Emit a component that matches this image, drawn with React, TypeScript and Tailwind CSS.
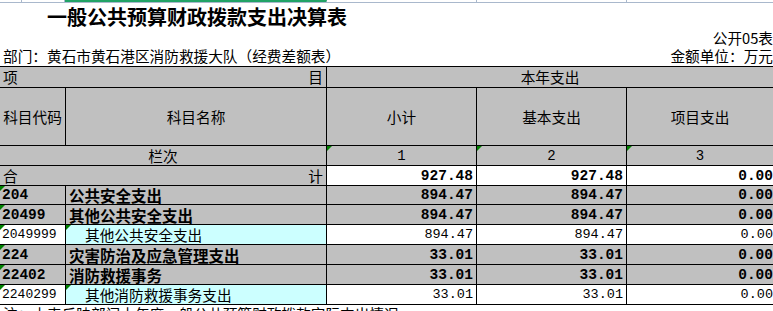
import React from "react";

type Row = { code: string; name: string; v: string[]; bold: boolean };

const rows: Row[] = [
  { code: "204", name: "公共安全支出", v: ["894.47", "894.47", "0.00"], bold: true },
  { code: "20499", name: "其他公共安全支出", v: ["894.47", "894.47", "0.00"], bold: true },
  { code: "2049999", name: "其他公共安全支出", v: ["894.47", "894.47", "0.00"], bold: false },
  { code: "224", name: "灾害防治及应急管理支出", v: ["33.01", "33.01", "0.00"], bold: true },
  { code: "22402", name: "消防救援事务", v: ["33.01", "33.01", "0.00"], bold: true },
  { code: "2240299", name: "其他消防救援事务支出", v: ["33.01", "33.01", "0.00"], bold: false },
];

const Tri = () => (
  <span className="absolute left-0 top-0 w-0 h-0 border-t-[5px] border-t-[#008000] border-r-[5px] border-r-transparent" />
);

const cell = "relative border-r border-b border-black flex items-center overflow-hidden whitespace-nowrap leading-[16px]";
const mono = "font-['Liberation_Mono',monospace]";

export default function App() {
  return (
    <div className="w-[773px] h-[311px] overflow-hidden bg-white text-black font-['Noto_Sans_CJK_SC',sans-serif] leading-none">
      <div className="flex h-[3px] w-[777px] border-b border-[#a9b8cc]">
        <div className="w-[22px] border-r border-[#a9b8cc]" />
        <div className="w-[43px] border-r border-[#a9b8cc]" />
        <div className="w-[262px] border-r border-[#a9b8cc] border-t-2 border-t-[#21a366]" />
        <div className="w-[150px] border-r border-[#a9b8cc]" />
        <div className="w-[150px] border-r border-[#a9b8cc]" />
        <div className="flex-1" />
      </div>
      <div className="h-[27px] flex items-center pl-[47px] text-[20px] font-bold">
        一般公共预算财政拨款支出决算表
      </div>
      <div className="h-[17px] flex items-center justify-end text-[14.67px]">公开05表</div>
      <div className="h-[19px] flex items-center justify-between pl-[3px] text-[14.67px]">
        <span>部门：黄石市黄石港区消防救援大队（经费差额表）</span>
        <span>金额单位：万元</span>
      </div>

      <div className="grid w-[777px] grid-cols-[66px_261px_150px_150px_150px] grid-rows-[22px_58px_20px_20px_19px_20px_20px_20px_20px_20px] text-[14.67px]">
        <div className={`${cell} col-span-2 border-t bg-[#c0c0c0] justify-between px-[3px]`}>
          <span>项</span>
          <span>目</span>
        </div>
        <div className={`${cell} col-span-3 border-t bg-[#c0c0c0] justify-center pr-[3px]`}>本年支出</div>

        <div className={`${cell} bg-[#c0c0c0] justify-center`}>科目代码</div>
        <div className={`${cell} bg-[#c0c0c0] justify-center`}>科目名称</div>
        <div className={`${cell} bg-[#c0c0c0] justify-center`}>小计</div>
        <div className={`${cell} bg-[#c0c0c0] justify-center`}>基本支出</div>
        <div className={`${cell} bg-[#c0c0c0] justify-center pr-[3px]`}>项目支出</div>

        <div className={`${cell} col-span-2 bg-[#c0c0c0] justify-center`}>栏次</div>
        {["1", "2", "3"].map((n, i) => (
          <div key={n} className={`${cell} bg-[#c0c0c0] justify-center ${mono} text-[14px] ${i === 2 ? "pr-[3px]" : ""}`}>
            <Tri />
            {n}
          </div>
        ))}

        <div className={`${cell} col-span-2 bg-[#c0c0c0] justify-between px-[3px]`}>
          <span>合</span>
          <span>计</span>
        </div>
        {["927.48", "927.48", "0.00"].map((v, i) => (
          <div key={i} className={`${cell} bg-white justify-end pr-[3px] ${mono} text-[14.5px] font-bold`}>
            {v}
          </div>
        ))}

        {rows.map((r) => (
          <React.Fragment key={r.code}>
            <div
              className={`${cell} pl-[2px] ${mono} ${
                r.bold ? "bg-[#c0c0c0] font-bold text-[14.5px]" : "bg-white text-[13px]"
              }`}
            >
              <Tri />
              {r.code}
            </div>
            <div
              className={`${cell} ${
                r.bold ? "bg-[#c0c0c0] font-bold text-[15.5px] pl-[3px]" : "bg-[#ccffff] pl-[19px]"
              }`}
            >
              {!r.bold && <Tri />}
              {r.name}
            </div>
            {r.v.map((v, i) => (
              <div
                key={i}
                className={`${cell} justify-end pr-[3px] ${mono} ${
                  r.bold ? "bg-[#c0c0c0] font-bold text-[14.5px]" : "bg-white text-[13.5px]"
                }`}
              >
                {v}
              </div>
            ))}
          </React.Fragment>
        ))}
      </div>
      <div className="h-[19px] pt-[2px] pl-[3px] text-[14.67px] whitespace-nowrap">
        注：本表反映部门本年度一般公共预算财政拨款实际支出情况。
      </div>
    </div>
  );
}
